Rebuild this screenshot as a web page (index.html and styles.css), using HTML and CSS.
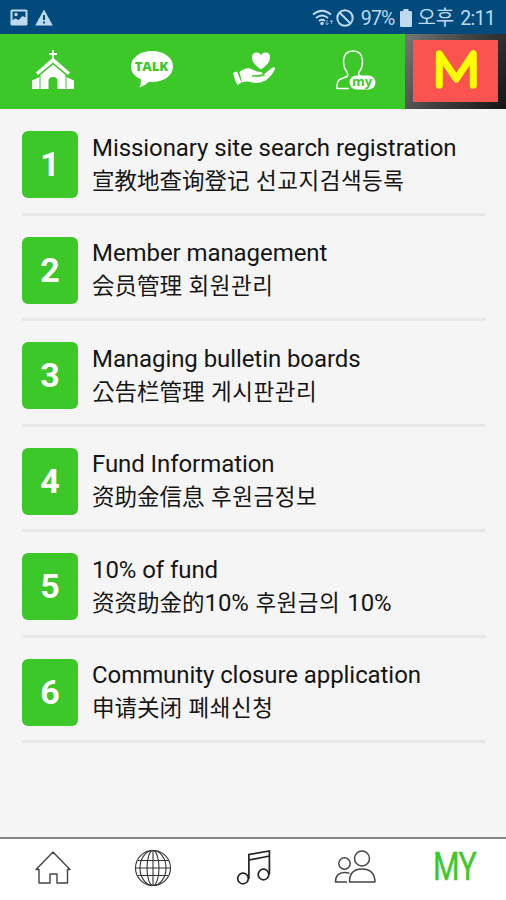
FILE: index.html
```html
<!DOCTYPE html>
<html lang="ko">
<head>
<meta charset="utf-8">
<title>MY</title>
<link rel="stylesheet" href="styles.css">
</head>
<body>
<div class="status">
  <div class="status-left">
    <svg width="18" height="17" viewBox="0 0 18 17"><path fill="#bfd9ef" fill-rule="evenodd" d="M2 0.500h14q1.500 0 1.500 1.500v13q0 1.500-1.500 1.500h-14q-1.500 0-1.500-1.500v-13q0-1.500 1.500-1.500zM2.500 2.500v8.500l3-1.500 3 1.500 4-4 3 1.500v-6z"/><circle cx="6" cy="5.500" r="1.700" fill="#bfd9ef"/></svg>
    <svg width="18" height="17" viewBox="0 0 18 17"><path fill="#bfd9ef" d="M9 .5 17.800 16.500H.2z"/><path stroke="#004a7c" stroke-width="2" d="M9 6v5M9 12.500v2"/></svg>
  </div>
  <div class="status-right">
    <svg width="22" height="18" viewBox="0 0 22 18"><g fill="none" stroke="#bfd9ef" stroke-width="1.800"><path d="M1 5.500Q10 -2 19 5.500M4 9Q10 4 16 9M7 12Q10 9.500 13 12"/></g><circle cx="10" cy="14.500" r="1.700" fill="#bfd9ef"/><path d="M15 11v5M13.500 14l1.500 2 1.500-2M19.500 15v-4M18 13l1.500-2 1.500 2" stroke="#7fa9ca" fill="none"/></svg>
    <svg class="block" width="18" height="18" viewBox="0 0 18 18"><g fill="none" stroke="#bfd9ef" stroke-width="2"><circle cx="9" cy="9" r="7.700"/><path d="m3.500 3.500 11 11"/></g></svg>
    <span class="percent">97%</span>
    <svg class="battery" width="12" height="18" viewBox="0 0 12 18"><path fill="#bfd9ef" d="M3.500 0h5v2H11q1 0 1 1v14q0 1-1 1H1q-1 0-1-1V3q0-1 1-1h2.500z"/></svg>
    <span class="ampm">오후</span><span class="clock">2:11</span>
  </div>
</div>
<header class="top">
  <div class="tab"><svg width="44" height="42" viewBox="0 0 44 42"><g fill="#fff"><path d="M21 0h2v3h3v2h-3v4h-2V5h-3V3h3z"/><path d="M22 7.500 39 22.500l-2 2.500L22 12.500 7 25l-2-2.500z"/><path d="M22 14.500 34.500 25v14h-8V31q0-4-4.500-4t-4.500 4v8h-8V25z"/><path d="M8.500 27v12H1V30.500zM35.500 27v12H43V30.500z"/></g></svg></div>
  <div class="tab"><div class="bubble"><svg width="44" height="38" viewBox="0 0 44 38"><path fill="#fff" d="M22 1C34 1 43 7.500 43 16.500S34 32 22 32q-1.500 0-3-.2-4 4.200-9.500 5.700 1.500-3.500 1.500-8Q1 25 1 16.500C1 7.500 10 1 22 1z"/></svg><span class="talk">TALK</span></div></div>
  <div class="tab"><svg width="44" height="38" viewBox="0 0 44 38"><g fill="#fff" transform="translate(0 1)"><path d="M29 18.500Q20 12.500 20 6.500 20 1.500 24.500 1.500 28 1.500 29 4.500 30.200 1.500 33.500 1.500 38 1.500 38 6.500 38 12.500 29 18.500z"/><path d="M1 22l4-1.500 4.500 11L5.500 34Q2.500 29 1 22z"/><path d="M7.500 21Q13 16.500 18 17.500L25 20.500Q30 20.500 31 22.500 29 24.300 20 24.300V25.300Q31 26.500 33 22.500L39 17.500Q43.500 15 43 18 40 25 33.500 29.500 28 33 20 31.500 15 29.500 10 31.500z"/></g><path fill="none" stroke="#3dc82a" stroke-width=".8" d="M20 25.800q8 1.200 13-.5"/></svg></div>
  <div class="tab"><div class="profile"><svg width="42" height="42" viewBox="0 0 42 42"><path fill="none" stroke="#fff" stroke-width="1.500" d="M14 38.500H2Q1 30 7 28.500L12 26.500Q13.500 25 12 22 8.500 18 8.500 11 9 1 18 1T27.500 11Q27.500 18 24 22 22.500 25 26 26.500"/><rect x="14.500" y="25.500" width="26" height="14" rx="7" fill="#fff"/></svg><span class="my">my</span></div></div>
  <div class="brand"><div class="brand-box"><svg width="42" height="42" viewBox="0 0 42 42"><path d="M4.300 37.300V5.700L21.300 31 38.300 5.700V37.300" fill="none" stroke="#ff0" stroke-width="7" stroke-linecap="round" stroke-linejoin="round"/></svg></div></div>
</header>
<main class="list">
  <div class="row"><div class="num">1</div><div class="text"><div class="en">Missionary site search registration</div><div class="cjk">宣教地查询登记 <span lang="ko">선교지검색등록</span></div></div></div>
  <div class="row"><div class="num">2</div><div class="text"><div class="en">Member management</div><div class="cjk">会员管理 <span lang="ko">회원관리</span></div></div></div>
  <div class="row"><div class="num">3</div><div class="text"><div class="en">Managing bulletin boards</div><div class="cjk">公告栏管理 <span lang="ko">게시판관리</span></div></div></div>
  <div class="row"><div class="num">4</div><div class="text"><div class="en">Fund Information</div><div class="cjk">资助金信息 <span lang="ko">후원금정보</span></div></div></div>
  <div class="row"><div class="num">5</div><div class="text"><div class="en">10% of fund</div><div class="cjk">资资助金的<b>10%</b> <span lang="ko">후원금의 <b>10%</b></span></div></div></div>
  <div class="row"><div class="num">6</div><div class="text"><div class="en">Community closure application</div><div class="cjk">申请关闭 <span lang="ko">폐쇄신청</span></div></div></div>
</main>
<nav class="bottom">
  <div class="nav-item"><svg width="38" height="36" viewBox="0 0 38 36"><path fill="none" stroke="#444" stroke-width="1.400" stroke-linejoin="round" d="M19 2 36 19.500H33.500V33H23V24H16V33H5V19.500H2z"/></svg></div>
  <div class="nav-item"><svg width="38" height="38" viewBox="0 0 38 38"><g fill="none" stroke="#333" stroke-width="1.100"><circle cx="19" cy="19" r="17.500"/><ellipse cx="19" cy="19" rx="13" ry="17.500"/><ellipse cx="19" cy="19" rx="6" ry="17.500"/><path d="M19 1.500v35M1.500 19h35M4 11.500h30M4 26.500h30"/></g></svg></div>
  <div class="nav-item"><svg width="36" height="38" viewBox="0 0 36 38"><g fill="none" stroke="#222" stroke-width="1.700"><circle cx="7" cy="30.500" r="5.300"/><circle cx="27.500" cy="26.500" r="5.300"/><path d="M12.900 31V6.500L33.400 3V26.500M13 12 33.500 8"/></g></svg></div>
  <div class="nav-item"><svg width="42" height="36" viewBox="0 0 42 36"><g fill="none" stroke="#444" stroke-width="1.500"><circle cx="28" cy="9.500" r="7.500"/><circle cx="10.500" cy="14.500" r="5.700"/><path stroke-linejoin="round" d="M15.500 33Q15.500 20 28 20T41 33zM13 33H1.500Q1.500 23.500 10.500 23.500 14 23.500 15.500 24.500"/></g></svg></div>
  <div class="nav-item"><span class="nav-my">MY</span></div>
</nav>
</body>
</html>
```

FILE: styles.css
```css
* { box-sizing: border-box; }
body {
  margin: 0;
  width: 506px;
  height: 900px;
  display: flex;
  flex-direction: column;
  overflow: hidden;
  background: #f5f5f5;
  font-family: Roboto, "Noto Sans CJK KR", sans-serif;
  color: #151515;
}
svg { display: block; }
.status {
  height: 34px;
  flex: none;
  background: #004a7c;
  display: flex;
  justify-content: space-between;
  padding: 1px 11px 0 10px;
  color: #bfd9ef;
}
.status-left, .status-right { display: flex; align-items: center; }
.status-left { gap: 7px; }
.block { margin-left: 2px; }
.percent { margin-left: 7px; font-size: 19.500px; letter-spacing: -.9px; padding-top: 1px; }
.battery { margin-left: 6px; }
.ampm { margin-left: 5px; font-size: 20px; line-height: 30px; }
.clock { margin-left: 6px; font-size: 19.500px; letter-spacing: -.7px; padding-top: 1px; }
.top {
  height: 75px;
  flex: none;
  background: #3dc82a;
  display: grid;
  grid-template-columns: 105px 93px 111px 94px 103px;
}
.tab { display: flex; justify-content: center; padding-top: 16px; }
.tab:nth-child(4) { padding-left: 0; }
.bubble, .profile { position: relative; height: 42px; }
.talk {
  position: absolute;
  inset: 8px 0 auto;
  text-align: center;
  font: 800 13px/16px "Open Sans", sans-serif;
  color: #3dc82a;
}
.my {
  position: absolute;
  left: 17px;
  top: 23px;
  font: 700 13px/16px "Open Sans", sans-serif;
  color: #3dc82a;
}
.brand {
  margin-left: 2px;
  background: linear-gradient(120deg, #777, #444 45%, #151515);
  padding: 6px 8px 7px;
}
.brand-box {
  height: 62px;
  background: #fa5350;
  display: flex;
  justify-content: center;
  padding-top: 8px;
}
.list { flex: 1; padding: 1px 20px 0 22px; }
.row {
  height: 105.500px;
  display: flex;
  align-items: center;
  gap: 14px;
  border-bottom: 3px solid #e8e8e8;
  padding-top: 7px;
}
.num {
  width: 56px;
  height: 67px;
  flex: none;
  border-radius: 6px;
  background: #3dc82a;
  color: #fff;
  font-size: 34px;
  font-weight: 700;
  line-height: 67px;
  text-align: center;
}
.text { white-space: nowrap; }
.en { font-size: 24px; line-height: 33px; letter-spacing: -.075px; }
.cjk {
  font-size: 22.500px;
  line-height: 33px;
  word-spacing: 1px;
  font-family: Roboto, "Noto Sans CJK SC", sans-serif;
}
.cjk span {
  font-family: Roboto, "Noto Sans CJK KR", sans-serif;
  letter-spacing: .5px;
}
.cjk b { font-size: 24px; font-weight: 400; letter-spacing: -.1px; line-height: 1; }
.bottom {
  height: 63px;
  flex: none;
  border-top: 2px solid #858585;
  background: #fff;
  display: grid;
  grid-template-columns: 105px 96px 105px 98px 102px;
  padding-bottom: 3px;
}
.nav-item { display: flex; justify-content: center; align-items: center; }
.nav-item:nth-child(n+3) svg { margin-bottom: 3px; }
.nav-my {
  font-size: 39px;
  line-height: 40px;
  color: #3dc82a;
  letter-spacing: -1px;
  -webkit-text-stroke: .4px #3dc82a;
  transform: scaleX(.78);
  margin: 0 2px 3px 0;
}
```
